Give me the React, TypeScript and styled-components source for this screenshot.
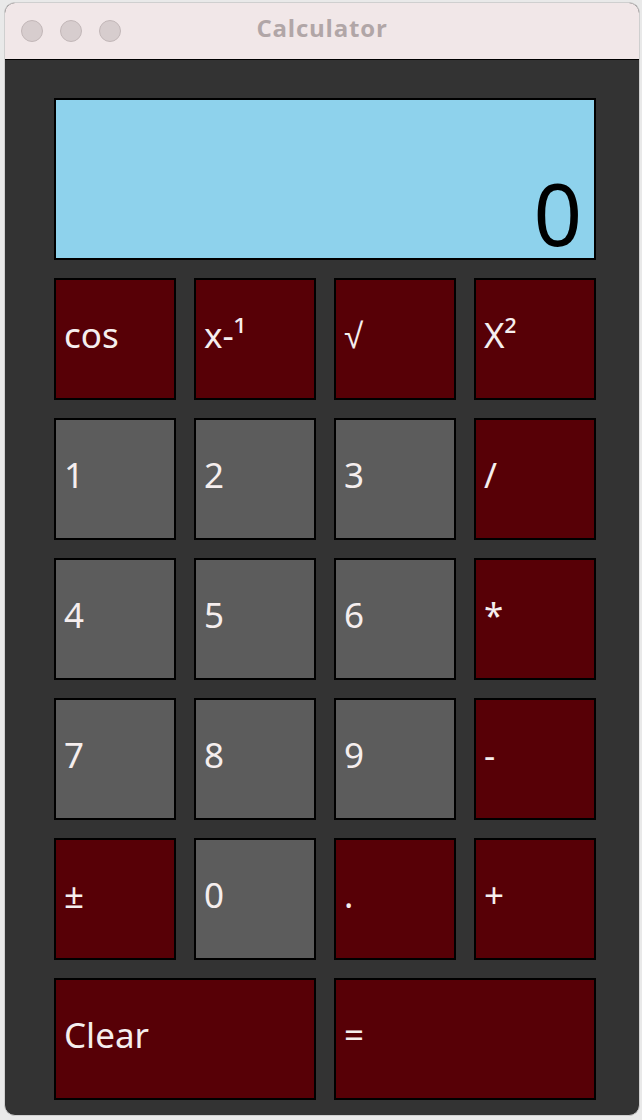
import React from "react";
import styled, { createGlobalStyle } from "styled-components";

const Global = createGlobalStyle`
  html, body { margin: 0; padding: 0; background: #e9e9e9; }
  body { width: 642px; height: 1120px; overflow: hidden; }
`;

const Page = styled.div`
  padding: 2px 0 0 4px;
`;

const Window = styled.div`
  width: 636px;
  height: 1114px;
  border-radius: 11px;
  overflow: hidden;
  border: 1px solid #cfcfcf;
  box-sizing: border-box;
  display: flex;
  flex-direction: column;
  background: #333333;
`;

const TitleBar = styled.div`
  position: relative;
  height: 56px;
  flex: none;
  background: #f1e7e8;
  border-bottom: 1px solid #000;
  display: flex;
  align-items: center;
  justify-content: center;
`;

const Lights = styled.div`
  position: absolute;
  left: 16px;
  top: 17px;
  display: flex;
  gap: 17px;
`;

const Light = styled.span`
  width: 22px;
  height: 22px;
  border-radius: 50%;
  background: #d7cdce;
  box-sizing: border-box;
  border: 1px solid #c2b7b8;
`;

const Title = styled.div`
  font-family: "Open Sans", Roboto, sans-serif;
  font-weight: 700;
  font-size: 24px;
  letter-spacing: 0.8px;
  color: #b1a6a7;
  margin-top: -7px;
`;

const Body = styled.div`
  flex: 1;
  padding: 38px 0 0 49px;
`;

const Grid = styled.div`
  width: 542px;
  display: grid;
  grid-template-columns: repeat(4, 122px);
  grid-template-rows: 162px repeat(6, 122px);
  gap: 18px;
`;

const Display = styled.div`
  grid-column: 1 / -1;
  box-sizing: border-box;
  border: 2px solid #000;
  background: #8ed2ec;
  display: flex;
  align-items: flex-end;
  justify-content: flex-end;
  padding: 0 12px 2px 0;
  font-family: "Noto Sans", sans-serif;
  font-size: 85px;
  line-height: 1;
  color: #000;
`;

const Key = styled.div<{ $tone: "red" | "gray"; $span?: number }>`
  grid-column: span ${(p) => p.$span ?? 1};
  box-sizing: border-box;
  border: 2px solid #000;
  background: ${(p) => (p.$tone === "red" ? "#570006" : "#5c5c5c")};
  color: #f5eeee;
  font-family: "Noto Sans", sans-serif;
  font-size: 35px;
  line-height: 1;
  display: flex;
  align-items: center;
  padding-left: 8px;
  padding-bottom: 10px;
`;

type K = { label: string; tone: "red" | "gray"; span?: number };

const keys: K[] = [
  { label: "cos", tone: "red" },
  { label: "x-¹", tone: "red" },
  { label: "√", tone: "red" },
  { label: "X²", tone: "red" },
  { label: "1", tone: "gray" },
  { label: "2", tone: "gray" },
  { label: "3", tone: "gray" },
  { label: "/", tone: "red" },
  { label: "4", tone: "gray" },
  { label: "5", tone: "gray" },
  { label: "6", tone: "gray" },
  { label: "*", tone: "red" },
  { label: "7", tone: "gray" },
  { label: "8", tone: "gray" },
  { label: "9", tone: "gray" },
  { label: "-", tone: "red" },
  { label: "±", tone: "red" },
  { label: "0", tone: "gray" },
  { label: ".", tone: "red" },
  { label: "+", tone: "red" },
  { label: "Clear", tone: "red", span: 2 },
  { label: "=", tone: "red", span: 2 },
];

export default function App() {
  return (
    <>
      <Global />
      <Page>
        <Window>
          <TitleBar>
            <Lights>
              <Light />
              <Light />
              <Light />
            </Lights>
            <Title>Calculator</Title>
          </TitleBar>
          <Body>
            <Grid>
              <Display>0</Display>
              {keys.map((k, i) => (
                <Key key={i} $tone={k.tone} $span={k.span}>
                  {k.label}
                </Key>
              ))}
            </Grid>
          </Body>
        </Window>
      </Page>
    </>
  );
}
